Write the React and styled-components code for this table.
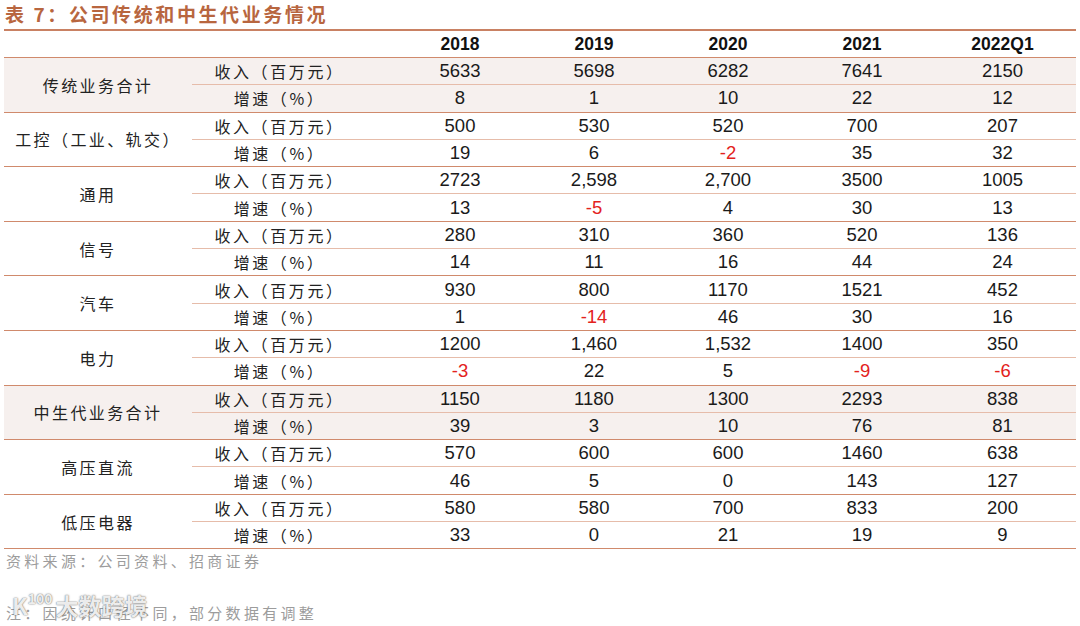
import React from 'react'
import styled, {createGlobalStyle} from 'styled-components'

const GlobalStyle = createGlobalStyle`
  body {
    margin: 0;
    background: #ffffff;
    font-family: "Liberation Sans", "Noto Sans CJK SC", sans-serif;
  }
`

const Page = styled.div`
  width: 1080px;
  height: 626px;
  padding: 0 4px;
  box-sizing: border-box;
  overflow: hidden;
`

const Title = styled.h1`
  margin: 0;
  height: 29px;
  padding: 3px 0 0 1px;
  box-sizing: border-box;
  font-family: "Noto Sans CJK SC", sans-serif;
  font-size: 19px;
  font-weight: bold;
  line-height: 22px;
  letter-spacing: 2.6px;
  color: #b8663f;
`

const Table = styled.table`
  width: 1072px;
  border-collapse: collapse;
  table-layout: fixed;
  border-top: 2px solid #c98163;
`

const HeadCell = styled.th`
  height: 26px;
  padding: 0;
  font-family: "Liberation Sans", Arial, sans-serif;
  font-size: 17.5px;
  font-weight: bold;
  color: #111;
  text-align: center;
  vertical-align: middle;
  border-bottom: 1.5px solid #d08a6c;
`

const Row = styled.tr`
  background: ${p => (p.$shade ? '#f6f0ee' : '#ffffff')};
  border-bottom: ${p => (p.$last ? '1.5px solid #d08a6c' : '1px solid #e6bcaa')};
`

const NameCell = styled.td`
  padding: 0;
  font-family: "Noto Sans CJK SC", sans-serif;
  font-size: 16px;
  letter-spacing: 2.4px;
  color: #222;
  text-align: center;
  vertical-align: middle;
  border-bottom: 1.5px solid #d08a6c;
`

const KindCell = styled.td`
  height: 26.3px;
  padding: 0 26px 0 0;
  font-family: "Noto Sans CJK SC", sans-serif;
  font-size: 16px;
  letter-spacing: 2.6px;
  color: #222;
  text-align: center;
  vertical-align: middle;
`

const NumCell = styled.td`
  padding: 0;
  font-family: "Liberation Sans", Arial, sans-serif;
  font-size: 18.5px;
  color: ${p => (p.$neg ? '#e3221d' : '#1a1a1a')};
  text-align: center;
  vertical-align: middle;
`

const Note = styled.p`
  margin: 0;
  font-family: "Noto Sans CJK SC", sans-serif;
  font-size: 15px;
  letter-spacing: 3.3px;
  color: #9c9c9c;
  padding-left: 2px;
`

const Source = styled(Note)`
  padding-top: 1px;
  height: 52px;
`

const NoteLine = styled.div`
  position: relative;
`

const Watermark = styled.div`
  position: absolute;
  left: 8px;
  top: -12px;
  display: flex;
  align-items: flex-start;
  font-family: "Noto Sans CJK SC", sans-serif;
  font-size: 23px;
  font-weight: bold;
  line-height: 30px;
  color: rgba(255, 255, 255, 0.88);
  text-shadow: 0 0 2px rgba(80, 80, 80, 0.6), 0 0 1px rgba(80, 80, 80, 0.7);
`

const Sup = styled.span`
  font-size: 14px;
  line-height: 16px;
  margin-right: 3px;
`

const years = ['2018', '2019', '2020', '2021', '2022Q1']

const groups = [
  {name: '传统业务合计', shade: true, rev: ['5633', '5698', '6282', '7641', '2150'], g: ['8', '1', '10', '22', '12']},
  {name: '工控（工业、轨交）', rev: ['500', '530', '520', '700', '207'], g: ['19', '6', '-2', '35', '32']},
  {name: '通用', rev: ['2723', '2,598', '2,700', '3500', '1005'], g: ['13', '-5', '4', '30', '13']},
  {name: '信号', rev: ['280', '310', '360', '520', '136'], g: ['14', '11', '16', '44', '24']},
  {name: '汽车', rev: ['930', '800', '1170', '1521', '452'], g: ['1', '-14', '46', '30', '16']},
  {name: '电力', rev: ['1200', '1,460', '1,532', '1400', '350'], g: ['-3', '22', '5', '-9', '-6']},
  {name: '中生代业务合计', shade: true, rev: ['1150', '1180', '1300', '2293', '838'], g: ['39', '3', '10', '76', '81']},
  {name: '高压直流', rev: ['570', '600', '600', '1460', '638'], g: ['46', '5', '0', '143', '127']},
  {name: '低压电器', rev: ['580', '580', '700', '833', '200'], g: ['33', '0', '21', '19', '9']},
]

const App = () => {
  return (
    <Page>
      <GlobalStyle />
      <Title>表 7：公司传统和中生代业务情况</Title>
      <Table>
        <colgroup>
          <col style={{width: 188}} />
          <col style={{width: 201}} />
          <col style={{width: 134}} />
          <col style={{width: 134}} />
          <col style={{width: 134}} />
          <col style={{width: 134}} />
          <col style={{width: 147}} />
        </colgroup>
        <thead>
          <tr>
            <HeadCell />
            <HeadCell />
            {years.map(y => (
              <HeadCell key={y}>{y}</HeadCell>
            ))}
          </tr>
        </thead>
        <tbody>
          {groups.map(gr => (
            <React.Fragment key={gr.name}>
              <Row $shade={gr.shade}>
                <NameCell rowSpan={2}>{gr.name}</NameCell>
                <KindCell>收入（百万元）</KindCell>
                {gr.rev.map((v, i) => (
                  <NumCell key={i}>{v}</NumCell>
                ))}
              </Row>
              <Row $shade={gr.shade} $last>
                <KindCell>增速（%）</KindCell>
                {gr.g.map((v, i) => (
                  <NumCell key={i} $neg={v.startsWith('-')}>{v}</NumCell>
                ))}
              </Row>
            </React.Fragment>
          ))}
        </tbody>
      </Table>
      <Source>资料来源：公司资料、招商证券</Source>
      <NoteLine>
        <Note>注：因统计口径不同，部分数据有调整</Note>
        <Watermark>
          <span>K</span>
          <Sup>100</Sup>
          <span>大数跨境</span>
        </Watermark>
      </NoteLine>
    </Page>
  )
}

export default App
